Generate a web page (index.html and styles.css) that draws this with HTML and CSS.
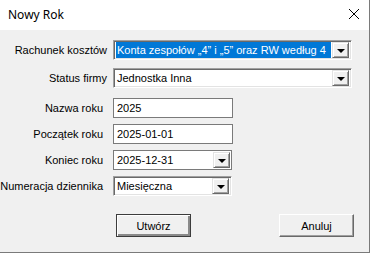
FILE: index.html
```html
<!DOCTYPE html>
<html lang="pl">
  <head>
    <title>Nowy Rok</title>
    <meta charset="UTF-8" />
    <link rel="stylesheet" href="styles.css">
  </head>
  <body>
    <div class="window">
      <div class="titlebar">
        <span class="title">Nowy Rok</span>
        <svg class="close" width="12" height="12" viewBox="0 0 12 12">
          <path d="M1 1 L11 11 M11 1 L1 11" stroke="#000" stroke-width="1" fill="none" />
        </svg>
      </div>

      <div class="content">
        <div class="row group-a">
          <label>Rachunek kosztów</label>
          <div class="combo sunken wide">
            <span class="value selected">Konta zespołów „4” i „5” oraz RW według 4</span>
            <span class="drop"><i></i></span>
          </div>
        </div>
        <div class="row group-a gap-b">
          <label>Status firmy</label>
          <div class="combo sunken wide">
            <span class="value">Jednostka Inna</span>
            <span class="drop"><i></i></span>
          </div>
        </div>
        <div class="row group-b">
          <label>Nazwa roku</label>
          <div class="edit"><span class="value">2025</span></div>
        </div>
        <div class="row group-b">
          <label>Początek roku</label>
          <div class="edit"><span class="value">2025-01-01</span></div>
        </div>
        <div class="row group-b">
          <label>Koniec roku</label>
          <div class="combo flat narrow">
            <span class="value">2025-12-31</span>
            <span class="drop"><i></i></span>
          </div>
        </div>
        <div class="row group-b">
          <label>Numeracja dziennika</label>
          <div class="combo sunken narrow">
            <span class="value">Miesięczna</span>
            <span class="drop"><i></i></span>
          </div>
        </div>

        <div class="buttons">
          <button class="btn default">Utwórz</button>
          <button class="btn">Anuluj</button>
        </div>
      </div>
    </div>
  </body>
</html>
```

FILE: styles.css
```css
body {
  margin: 0;
  background: #f0f0f0;
  font-family: "Liberation Sans", Arial, sans-serif;
  font-size: 11px;
  color: #000;
}
.window {
  width: 370px;
  height: 253px;
  box-sizing: border-box;
  background: #f0f0f0;
  border-right: 1px solid #7a7a7a;
  border-bottom: 1px solid #7a7a7a;
}
.titlebar {
  height: 30px;
  background: #fff;
  display: flex;
  align-items: center;
  justify-content: space-between;
  padding: 0 8px 0 8px;
}
.title {
  font-family: "Noto Sans", sans-serif;
  font-size: 12px;
  margin-top: -1px;
}
.close {
  margin-right: 1px;
  margin-top: -2px;
}
.content {
  padding-top: 10px;
}
.row {
  display: flex;
  align-items: center;
  height: 20px;
  margin-bottom: 6px;
}
.row label {
  text-align: right;
  white-space: nowrap;
}
.group-a label {
  width: 107px;
  margin-right: 6px;
}
.group-a {
  margin-bottom: 8px;
}
.group-a.gap-b {
  margin-bottom: 10px;
}
.group-b label {
  width: 103px;
  margin-right: 10px;
}
.combo,
.edit {
  height: 20px;
  box-sizing: border-box;
  background: #fff;
  display: flex;
  align-items: center;
}
.wide {
  width: 239px;
}
.narrow {
  width: 119px;
}
.edit {
  width: 120px;
  border: 1px solid #7a7a7a;
  padding-left: 3px;
}
.sunken {
  border: 1px solid;
  border-color: #a0a0a0 #fff #fff #a0a0a0;
  box-shadow: inset 1px 1px 0 #696969, inset -1px -1px 0 #e3e3e3;
  padding: 2px;
}
.flat {
  border: 1px solid #7a7a7a;
  padding: 1px 1px 1px 3px;
}
.value {
  flex: 1;
  white-space: nowrap;
  overflow: hidden;
  line-height: 16px;
}
.sunken .value {
  padding-left: 1px;
}
.selected {
  background: #0078d7;
  color: #fff;
  margin-right: 1px;
}
.drop {
  width: 17px;
  height: 16px;
  box-sizing: border-box;
  background: #f0f0f0;
  border: 1px solid;
  border-color: #e3e3e3 #696969 #696969 #e3e3e3;
  box-shadow: inset 1px 1px 0 #fff, inset -1px -1px 0 #a0a0a0;
  display: flex;
  align-items: center;
  justify-content: center;
}
.drop i {
  width: 0;
  height: 0;
  border-left: 4px solid transparent;
  border-right: 4px solid transparent;
  border-top: 4px solid #000;
  margin-top: 1px;
}
.buttons {
  display: flex;
  gap: 88px;
  padding-left: 116px;
  margin-top: 18px;
}
.btn {
  width: 75px;
  height: 23px;
  font-family: "Liberation Sans", Arial, sans-serif;
  font-size: 11px;
  background: #f0f0f0;
  border: 1px solid;
  border-color: #fff #696969 #696969 #fff;
  box-shadow: inset -1px -1px 0 #a0a0a0;
  padding: 0;
}
.btn.default {
  border: 1px solid #3c3c3c;
  box-shadow: inset 1px 1px 0 #fff, inset -2px -2px 0 #8a8a8a;
}
```
